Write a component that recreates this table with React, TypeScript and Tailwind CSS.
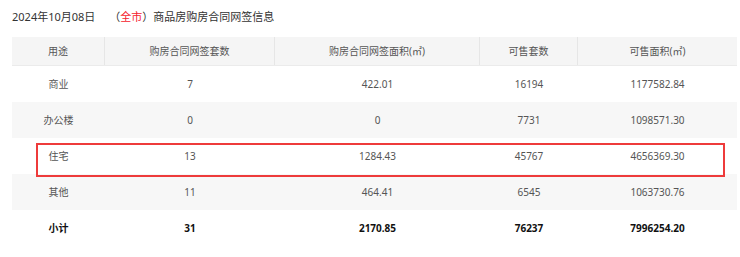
const headers = ["用途", "购房合同网签套数", "购房合同网签面积(㎡)", "可售套数", "可售面积(㎡)"];

const rows = [
  ["商业", "7", "422.01", "16194", "1177582.84"],
  ["办公楼", "0", "0", "7731", "1098571.30"],
  ["住宅", "13", "1284.43", "45767", "4656369.30"],
  ["其他", "11", "464.41", "6545", "1063730.76"],
];

const total = ["小计", "31", "2170.85", "76237", "7996254.20"];

const cols = "grid grid-cols-[93px_170px_205px_98px_159px]";

const App = () => {
  return (
    <div
      className="w-[740px] h-[257px] bg-white text-[#555] relative"
      style={{ fontFamily: '"Noto Sans", "Noto Sans CJK SC", sans-serif' }}
    >
      <div className="px-3 pt-[9px] h-[37px] text-[11px] text-[#333] leading-[16px]">
        2024年10月08日<span className="ml-[14px]">（</span>
        <span className="text-[#f5222d]">全市</span>
        <span>）</span>商品房购房合同网签信息
      </div>

      <div className="ml-3 w-[725px] text-[10px]">
        <div className={`${cols} h-[29px] bg-[#f5f5f5] border-b border-[#ebebeb]`}>
          {headers.map((h, i) => (
            <div
              key={h}
              className={`flex items-center justify-center ${i < 4 ? "border-r border-[#e6e6e6]" : ""}`}
            >
              {h}
            </div>
          ))}
        </div>

        {rows.map((r, idx) => (
          <div key={r[0]} className={`${cols} h-[36px] ${idx % 2 === 1 ? "bg-[#f7f7f7]" : "bg-white"}`}>
            {r.map((c, i) => (
              <div key={i} className="flex items-center justify-center">
                {c}
              </div>
            ))}
          </div>
        ))}

        <div className={`${cols} h-[36px] font-bold text-[#111]`}>
          {total.map((c, i) => (
            <div key={i} className="flex items-center justify-center">
              {c}
            </div>
          ))}
        </div>
      </div>

      {/* highlight box on 住宅 */}
      <div className="absolute left-[36px] top-[143px] w-[689px] h-[34px] border-2 border-[#ee3b3b]" />
    </div>
  );
};

export default App;
